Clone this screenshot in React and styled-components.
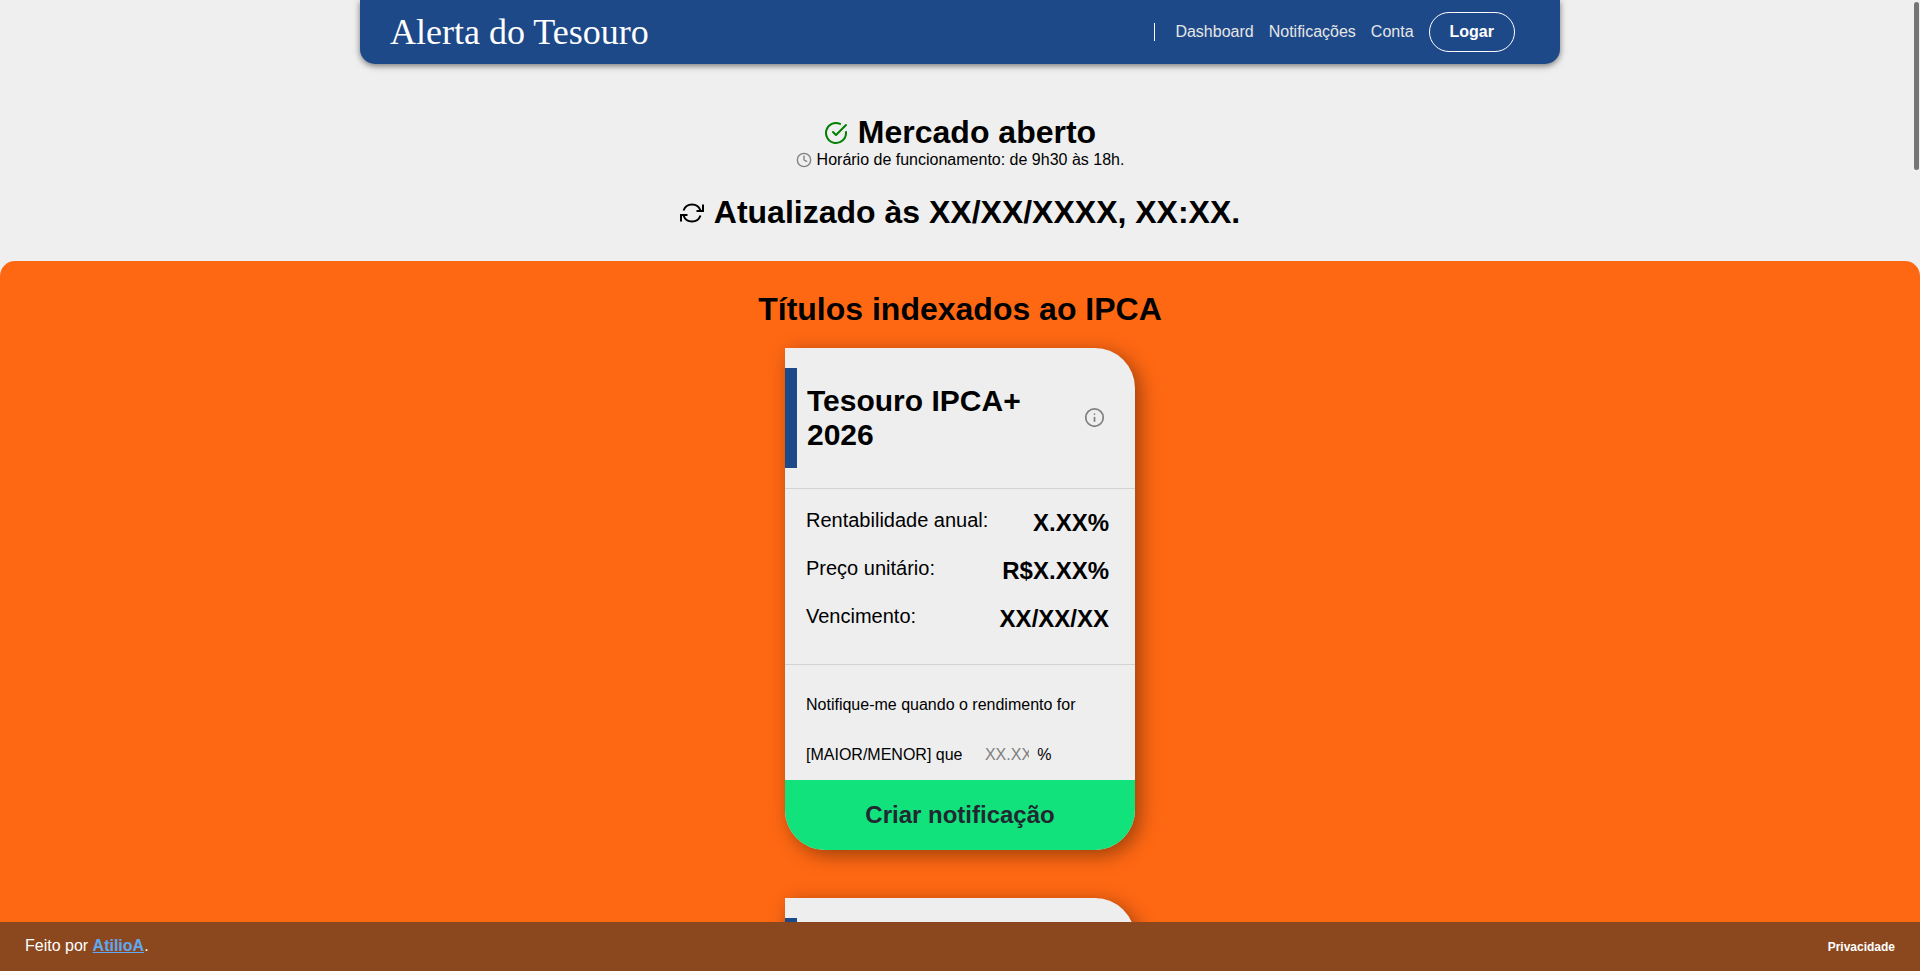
import React from "react";
import styled, { createGlobalStyle } from "styled-components";
import { FiCheckCircle, FiClock, FiInfo } from "react-icons/fi";

const colors = {
  page: "#efefef",
  card: "#eeeeee",
  blue: "#1d4989",
  orange: "#ff6813",
  green: "#11e27b",
  brown: "#8b481e",
  line: "#d3d3d3",
};

const GlobalStyle = createGlobalStyle`
  * {
    box-sizing: border-box;
    margin: 0;
    padding: 0;
  }
  body {
    background: ${colors.page};
    color: #000;
    font-family: "Liberation Sans", Arial, sans-serif;
    font-size: 16px;
  }
  button, input {
    font-family: inherit;
    border: 0;
    background: none;
  }
  button {
    cursor: pointer;
  }
`;

const Page = styled.div`
  display: flex;
  flex-direction: column;
  height: 100vh;
`;

const Content = styled.div`
  flex: 1;
  min-height: 0;
  overflow-y: auto;
  scrollbar-width: none;
`;

const ScrollThumb = styled.div`
  position: fixed;
  top: 2px;
  right: 1px;
  width: 5px;
  height: 168px;
  border-radius: 3px;
  background: #757575;
`;

const Header = styled.header`
  display: flex;
  align-items: center;
  justify-content: space-between;
  max-width: 1200px;
  height: 64px;
  margin: 0 auto;
  padding: 0 45px 0 30px;
  border-radius: 0 0 15px 15px;
  background: ${colors.blue};
  box-shadow: 0 2px 6px rgba(0, 0, 0, 0.5);
`;

const Brand = styled.a`
  color: #fff;
  font-family: "Liberation Serif", "Times New Roman", serif;
  font-size: 36px;
  text-decoration: none;
`;

const Nav = styled.nav`
  display: flex;
  align-items: center;
  gap: 15px;
`;

const NavDivider = styled.span`
  width: 1px;
  height: 18px;
  margin-right: 5px;
  background: #fff;
`;

const NavLink = styled.a`
  color: #e6e6e6;
  text-decoration: none;
`;

const LoginButton = styled.button`
  height: 40px;
  padding: 0 20px;
  border: 1px solid #fff;
  border-radius: 20px;
  color: #fff;
  font-size: 16px;
  font-weight: 700;
`;

const Status = styled.section`
  display: flex;
  flex-direction: column;
  align-items: center;
  padding: 50px 0 30px;
`;

const Heading = styled.h2`
  display: flex;
  align-items: center;
  gap: 10px;
  font-size: 32px;
  line-height: 37px;
`;

const Hours = styled.p`
  display: flex;
  align-items: center;
  gap: 5px;
  margin-bottom: 25px;
  line-height: 18px;
`;

const Bonds = styled.main`
  display: flex;
  flex-direction: column;
  align-items: center;
  padding: 30px 0;
  border-radius: 15px 15px 0 0;
  background: ${colors.orange};
`;

const CardList = styled.div`
  display: flex;
  flex-direction: column;
  gap: 48px;
  width: 350px;
  margin-top: 20px;
`;

const Card = styled.article`
  overflow: hidden;
  border-radius: 0 40px 40px 40px;
  background: ${colors.card};
  box-shadow: 5px 5px 20px rgba(0, 0, 0, 0.4);
`;

const CardHeader = styled.header`
  display: flex;
  align-items: center;
  padding: 20px 30px 20px 0;
  border-bottom: 1px solid ${colors.line};
`;

const CardTitle = styled.h3`
  display: flex;
  align-items: center;
  flex: 1;
  height: 100px;
  padding: 0 40px 0 10px;
  border-left: 12px solid ${colors.blue};
  font-size: 30px;
  line-height: 34px;
`;

const InfoButton = styled.button`
  display: flex;
  height: 22px;
  color: #808080;
`;

const Facts = styled.dl`
  display: flex;
  flex-direction: column;
  gap: 20px;
  padding: 20px 26px 31px 21px;
  border-bottom: 1px solid ${colors.line};
`;

const Fact = styled.div`
  display: flex;
  align-items: flex-start;
  justify-content: space-between;
`;

const FactName = styled.dt`
  font-size: 20px;
  line-height: 23px;
`;

const FactValue = styled.dd`
  font-size: 24px;
  font-weight: 700;
  line-height: 28px;
`;

const Notify = styled.form`
  padding-top: 15px;
`;

const NotifyText = styled.label`
  display: block;
  padding: 0 21px;
  line-height: 50px;
`;

const RateInput = styled.input`
  width: 44px;
  margin: 0 4px 0 18px;
  font-size: 16px;
  &::placeholder {
    color: #808080;
  }
`;

const CreateButton = styled.button`
  display: block;
  width: 100%;
  height: 70px;
  background: ${colors.green};
  color: #222831;
  font-size: 24px;
  font-weight: 700;
`;

const Footer = styled.footer`
  display: flex;
  align-items: baseline;
  justify-content: space-between;
  position: relative;
  height: 49px;
  padding: 15px 25px 0;
  background: ${colors.brown};
  color: #fff;
  line-height: 18px;
`;

const AuthorLink = styled.a`
  color: #5ea8f5;
  font-weight: 700;
`;

const PrivacyLink = styled.a`
  color: #fff;
  font-size: 12px;
  font-weight: 700;
  text-decoration: none;
`;

const bonds = ["Tesouro IPCA+ 2026", "Tesouro IPCA+ 2035"];

const facts = [
  ["Rentabilidade anual:", "X.XX%"],
  ["Preço unitário:", "R$X.XX%"],
  ["Vencimento:", "XX/XX/XX"],
];

function RefreshIcon() {
  return (
    <svg
      width="24"
      height="24"
      viewBox="0 0 24 24"
      fill="none"
      stroke="currentColor"
      strokeWidth="2"
      aria-hidden="true"
    >
      <path d="M23 3.5V10H16.5" />
      <path d="M1 20.5V14H7.5" />
      <path d="M3.51 9.5A9 9 0 0 1 20.49 9.5" />
      <path d="M20.49 14.5A9 9 0 0 1 3.51 14.5" />
    </svg>
  );
}

function BondCard({ title }) {
  return (
    <Card>
      <CardHeader>
        <CardTitle>{title}</CardTitle>
        <InfoButton type="button" aria-label="Informações">
          <FiInfo size={21} />
        </InfoButton>
      </CardHeader>
      <Facts>
        {facts.map(([name, value]) => (
          <Fact key={name}>
            <FactName>{name}</FactName>
            <FactValue>{value}</FactValue>
          </Fact>
        ))}
      </Facts>
      <Notify onSubmit={(e) => e.preventDefault()}>
        <NotifyText>
          Notifique-me quando o rendimento for
          <br />
          [MAIOR/MENOR] que <RateInput placeholder="XX.XX" /> %
        </NotifyText>
        <CreateButton type="submit">Criar notificação</CreateButton>
      </Notify>
    </Card>
  );
}

export default function App() {
  return (
    <Page>
      <GlobalStyle />
      <Content>
        <Header>
          <Brand href="#">Alerta do Tesouro</Brand>
          <Nav>
            <NavDivider />
            <NavLink href="#">Dashboard</NavLink>
            <NavLink href="#">Notificações</NavLink>
            <NavLink href="#">Conta</NavLink>
            <LoginButton type="button">Logar</LoginButton>
          </Nav>
        </Header>
        <Status>
          <Heading>
            <FiCheckCircle size={24} color="green" />
            Mercado aberto
          </Heading>
          <Hours>
            <FiClock size={16} color="gray" />
            Horário de funcionamento: de 9h30 às 18h.
          </Hours>
          <Heading>
            <RefreshIcon />
            Atualizado às XX/XX/XXXX, XX:XX.
          </Heading>
        </Status>
        <Bonds>
          <Heading>Títulos indexados ao IPCA</Heading>
          <CardList>
            {bonds.map((title) => (
              <BondCard key={title} title={title} />
            ))}
          </CardList>
        </Bonds>
      </Content>
      <Footer>
        <p>
          Feito por <AuthorLink href="#">AtilioA</AuthorLink>.
        </p>
        <PrivacyLink href="#">Privacidade</PrivacyLink>
      </Footer>
      <ScrollThumb aria-hidden="true" />
    </Page>
  );
}
